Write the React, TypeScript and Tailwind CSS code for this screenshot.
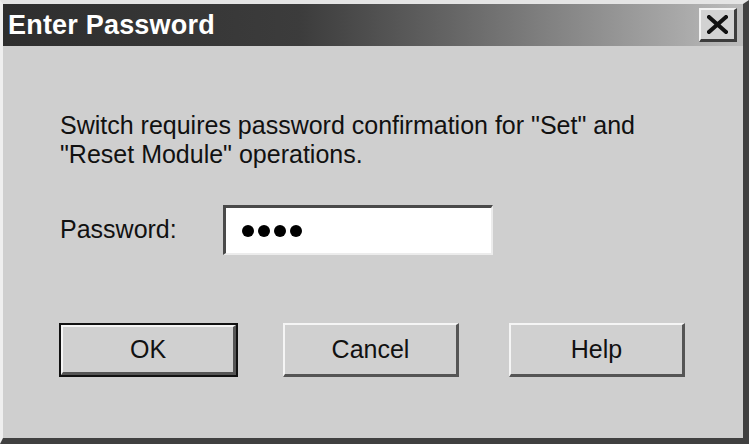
import { type ReactNode } from 'react'

const FONT = { fontFamily: '"Liberation Sans", Arial, sans-serif' }

function CloseButton() {
  return (
    <div className="w-[38px] h-[34px] bg-[#d2d2d2] border-t-2 border-l-2 border-t-[#f2f2f2] border-l-[#f2f2f2] border-b-[3px] border-r-[3px] border-b-[#3c3c3c] border-r-[#3c3c3c] flex items-center justify-center">
      <svg width="21" height="19" viewBox="0 0 21 19">
        <path d="M2 2 L19 17 M19 2 L2 17" stroke="#111" strokeWidth="4" strokeLinecap="square" />
      </svg>
    </div>
  )
}

function Button({ children, isDefault, className }: { children: ReactNode; isDefault?: boolean; className?: string }) {
  const face = (
    <div className="flex-1 flex items-center justify-center bg-[#d0d0d0] border-t-2 border-l-2 border-t-[#f5f5f5] border-l-[#f5f5f5] border-b-[3px] border-r-[3px] border-b-[#555] border-r-[#555] text-[25px] text-[#111]">
      {children}
    </div>
  )
  if (isDefault) {
    return <div className={`h-[54px] flex border-2 border-[#111] ${className ?? ''}`}>{face}</div>
  }
  return <div className={`h-[54px] flex ${className ?? ''}`}>{face}</div>
}

export default function App() {
  return (
    <div
      style={FONT}
      className="w-[749px] h-[444px] flex flex-col bg-[#cfcfcf] border-t-4 border-l-[3px] border-r-[6px] border-b-[6px] border-t-[#e4e4e4] border-l-[#efefef] border-r-[#404040] border-b-[#404040]"
    >
      {/* title bar, grayscale version of the win2k gradient */}
      <div className="h-[42px] flex items-center justify-between pl-[5px] pr-[6px] bg-gradient-to-r from-[#2e2e2e] via-[#3c3c3c] via-40% to-[#bcbcbc]">
        <span className="text-white font-bold text-[27px] leading-none tracking-[0.2px]">Enter Password</span>
        <CloseButton />
      </div>

      <div className="flex flex-col pl-[57px] pt-[65px] text-[#111]">
        <p className="text-[25px] leading-[29px] whitespace-nowrap">
          Switch requires password confirmation for "Set" and
          <br />
          "Reset Module" operations.
        </p>

        <div className="flex items-center mt-[36px]">
          <span className="text-[25px] w-[163px]">Password:</span>
          <div className="w-[270px] h-[50px] flex items-center bg-white border-t-[3px] border-l-[3px] border-t-[#4a4a4a] border-l-[#4a4a4a] border-b-2 border-r-2 border-b-[#ececec] border-r-[#ececec] pl-[16px] gap-[4px]">
            {[0, 1, 2, 3].map(i => (
              <span key={i} className="w-[12px] h-[12px] rounded-full bg-black" />
            ))}
          </div>
        </div>

        <div className="flex mt-[68px] -ml-px">
          <Button isDefault className="w-[179px]">
            OK
          </Button>
          <Button className="w-[176px] ml-[45px]">Cancel</Button>
          <Button className="w-[176px] ml-[50px]">Help</Button>
        </div>
      </div>
    </div>
  )
}
